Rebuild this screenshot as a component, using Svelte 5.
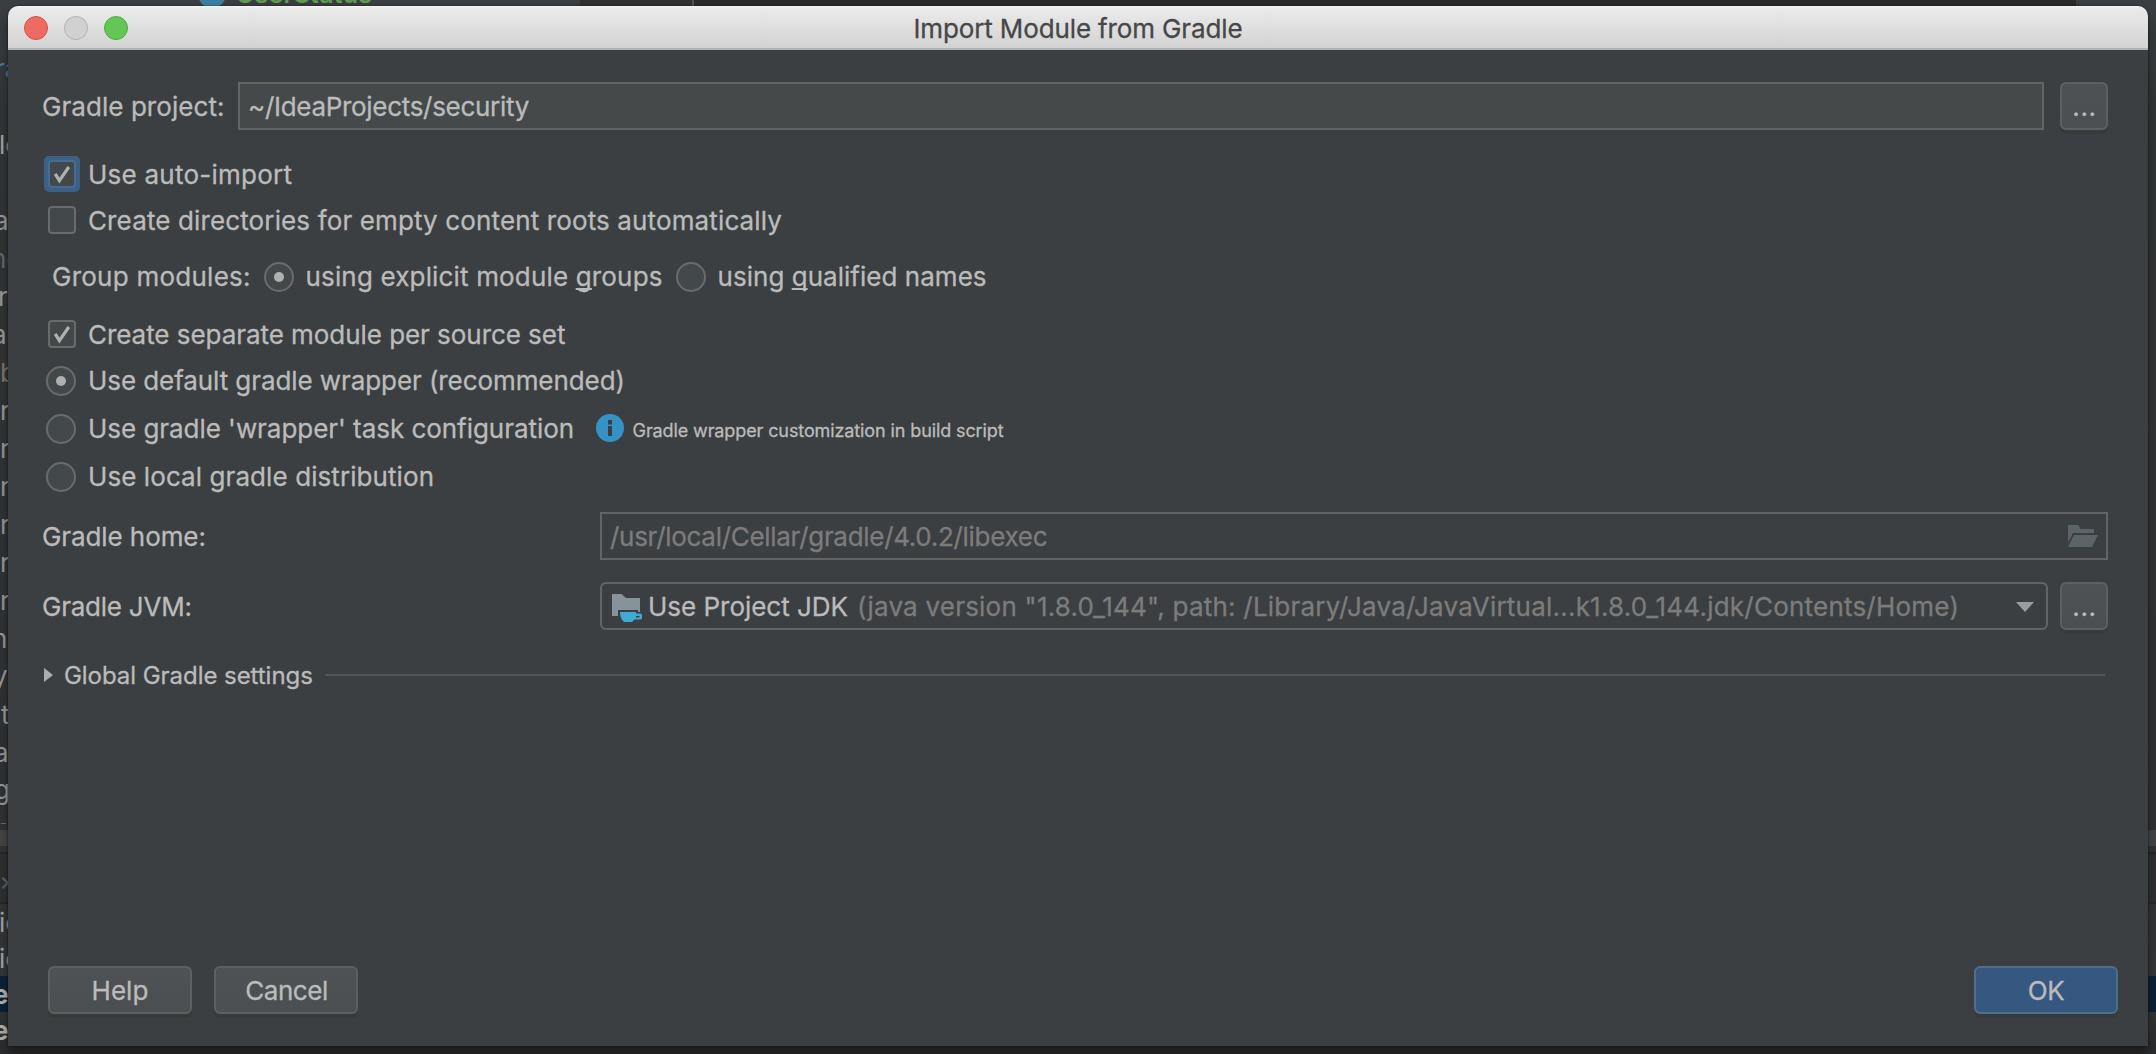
<script>
  // Fragments of the IDE project tree that stay visible beside the dialog.
  const fragments = [
    { text: 'ra', x: -5, y: 78, color: '#4e7ba3' },
    { text: 'lo', x: -1, y: 154, color: '#a0a4a0' },
    { text: 'a', x: -6, y: 230, color: '#96989a' },
    { text: 'ne', x: -9, y: 268, color: '#66686a' },
    { text: 'r', x: -2, y: 306, color: '#96989a' },
    { text: 'ar', x: -8, y: 344, color: '#96989a' },
    { text: 'b', x: 0, y: 382, color: '#7d7468' },
    { text: 'r', x: 0, y: 420, color: '#96989a' },
    { text: 'r', x: 0, y: 458, color: '#96989a' },
    { text: 'r', x: 0, y: 496, color: '#96989a' },
    { text: 'r', x: 0, y: 534, color: '#96989a' },
    { text: 'r', x: 0, y: 572, color: '#96989a' },
    { text: 'r', x: 0, y: 610, color: '#96989a' },
    { text: 'n', x: -8, y: 648, color: '#96989a' },
    { text: 'ys', x: -7, y: 685, color: '#96989a' },
    { text: 't', x: 1, y: 724, color: '#96989a' },
    { text: 'a', x: -6, y: 762, color: '#96989a' },
    { text: 'g', x: -6, y: 799, color: '#96989a' },
    { text: '×', x: -1, y: 890, color: '#5e6062' },
    { text: 'ic', x: -1, y: 932, color: '#a0a4a6' },
    { text: 'ic', x: -1, y: 968, color: '#a0a4a6' },
    { text: 'e', x: -7, y: 1004, color: '#b0b0b0', bold: true },
    { text: 'e', x: -7, y: 1040, color: '#b0b0b0', bold: true },
  ];

  let autoImport = $state(true);
  let createDirs = $state(false);
  let perSourceSet = $state(true);
  let grouping = $state('explicit');
  let distribution = $state('default');
</script>

{#snippet check(on)}
  <span class="box">
    {#if on}
      <svg viewBox="0 0 24 24" width="24" height="24"><path d="M5.2 11.8 9.4 18.6 18.8 5" /></svg>
    {/if}
  </span>
{/snippet}

{#snippet radio(on)}
  <span class="radio">{#if on}<i></i>{/if}</span>
{/snippet}

<div class="desktop">
  <div class="backdrop" aria-hidden="true">
    <div class="editor"></div>
    <div class="class-icon"></div>
    <div class="class-name">UserStatus</div>
    <div class="scrollbar"></div>
    <div class="tabs"></div>
    <div class="selection"></div>
    <svg class="tree" width="8" height="1054">
      {#each fragments as f}
        <text x={f.x} y={f.y} fill={f.color} font-weight={f.bold ? 700 : 400}>{f.text}</text>
      {/each}
      <path d="M1 823.5h5" stroke="#6a6c6e" />
    </svg>
  </div>

  <section class="dialog">
    <header>
      <div class="lights"><i class="red"></i><i class="grey"></i><i class="green"></i></div>
      <h1>Import Module from Gradle</h1>
    </header>

    <div class="body">
      <div class="row project">
        <span class="label l-project">Gradle project:</span>
        <div class="field"><span class="path">~/IdeaProjects/security</span></div>
        <button class="more">...</button>
      </div>

      <button class="row opt auto" onclick={() => (autoImport = !autoImport)}>
        <span class="focus">{@render check(autoImport)}</span>
        <span class="t-auto">Use auto-import</span>
      </button>
      <button class="row opt dirs" onclick={() => (createDirs = !createDirs)}>
        <span class="slot">{@render check(createDirs)}</span>
        <span class="t-dirs">Create directories for empty content roots automatically</span>
      </button>

      <div class="row group">
        <span class="label l-group">Group modules:</span>
        <button class="choice first" onclick={() => (grouping = 'explicit')}>
          {@render radio(grouping === 'explicit')}
          <span class="t-explicit">using explicit module <u>g</u>roups</span>
        </button>
        <button class="choice" onclick={() => (grouping = 'qualified')}>
          {@render radio(grouping === 'qualified')}
          <span class="t-qualified">using <u>q</u>ualified names</span>
        </button>
      </div>

      <button class="row opt separate" onclick={() => (perSourceSet = !perSourceSet)}>
        <span class="slot">{@render check(perSourceSet)}</span>
        <span class="t-separate">Create separate module per source set</span>
      </button>

      <button class="row dist" onclick={() => (distribution = 'default')}>
        {@render radio(distribution === 'default')}
        <span class="t-default">Use default gradle wrapper (recommended)</span>
      </button>
      <button class="row dist next" onclick={() => (distribution = 'task')}>
        {@render radio(distribution === 'task')}
        <span class="t-task">Use gradle 'wrapper' task configuration</span>
        <svg class="info" width="28" height="28" viewBox="0 0 28 28">
          <circle cx="14" cy="14" r="14" fill="#3592c4" />
          <path d="M12 6h4v4.500h-4zM12 12h4v10h-4z" fill="#3c3f41" />
        </svg>
        <span class="hint">Gradle wrapper customization in build script</span>
      </button>
      <button class="row dist next" onclick={() => (distribution = 'local')}>
        {@render radio(distribution === 'local')}
        <span class="t-local">Use local gradle distribution</span>
      </button>

      <div class="row home">
        <span class="label l-home">Gradle home:</span>
        <div class="field disabled">
          <span class="path">/usr/local/Cellar/gradle/4.0.2/libexec</span>
          <svg width="30" height="22" viewBox="0 0 30 22" fill="#5d6467">
            <path d="M0 0h10l2.500 4H26v4H5L0 17.500z" />
            <path d="M6 10h24l-6 12H0z" />
          </svg>
        </div>
      </div>

      <div class="row jvm">
        <span class="label l-jvm">Gradle JVM:</span>
        <div class="select">
          <svg width="31" height="28" viewBox="0 0 31 28">
            <path d="M0 0h9.500l4.500 4h14v14h-2v-2H6v6H0z" fill="#87939a" />
            <path d="M8 18h16v1.500h4.500q1.500 0 1.500 1.500v3q0 1.500-1.500 1.500h-6L20 28h-8q-4-3.500-4-10zM24 22v1.500h3.500V22z" fill="#40a9d4" fill-rule="evenodd" />
          </svg>
          <span class="jdk">Use Project JDK</span>
          <span class="version">(java version "1.8.0_144", path: /Library/Java/JavaVirtual...k1.8.0_144.jdk/Contents/Home)</span>
          <svg class="arrow" width="18" height="10" viewBox="0 0 18 10"><path d="M0 0h18l-9 10z" fill="#9a9da0" /></svg>
        </div>
        <button class="more">...</button>
      </div>

      <div class="row global">
        <svg width="9" height="14" viewBox="0 0 9 14"><path d="M0 0l9 7-9 7z" fill="#adadad" /></svg>
        <span>Global Gradle settings</span>
        <hr />
      </div>

      <footer>
        <button class="btn help">Help</button>
        <button class="btn cancel">Cancel</button>
        <button class="btn ok">OK</button>
      </footer>
    </div>
  </section>
</div>

<style>
  :global(body) { overflow: hidden; }
  .desktop {
    position: relative;
    box-sizing: border-box;
    width: 2156px;
    height: 1054px;
    padding: 6px 8px 8px;
    background: linear-gradient(#3a3e40, #323536 110px, #303132 780px, #353637 1000px, #2b2c2d);
    font: 26px/30px Inter, sans-serif;
    color: #bbb;
    overflow: hidden;
  }
  .desktop * { box-sizing: border-box; }
  button {
    margin: 0;
    padding: 0;
    border: 0;
    background: none;
    font: inherit;
    color: inherit;
    text-align: left;
  }
  span { white-space: pre; }
  svg { display: block; flex: none; }

  /* IDE window behind the dialog */
  .backdrop, .backdrop > * { position: absolute; }
  .backdrop { inset: 0; overflow: hidden; }
  .editor { left: 580px; top: 0; width: 1496px; height: 8px; background: #2a2a2b; }
  .editor::before { content: ''; display: block; width: 112px; height: 8px; border-right: 2px solid #505050; background: #303132; }
  .class-icon { left: 198px; top: -20px; width: 28px; height: 28px; border-radius: 50%; background: #3c7f9d; }
  .class-name { left: 236px; top: -21px; font-size: 25px; font-weight: 600; letter-spacing: 0.2px; color: #5f9a50; }
  .scrollbar { left: 0; right: 0; top: 830px; height: 16px; background: #454546; }
  .tabs { left: 0; right: 0; top: 852px; height: 52px; border: solid #262728; border-width: 2px 0; background: #2e2f30; }
  .selection { left: 0; right: 0; top: 976px; height: 36px; background: #0c2135; }
  .tree { left: 0; top: 0; }

  .dialog {
    position: relative;
    display: flex;
    flex-direction: column;
    height: 1040px;
    border-radius: 11px 11px 0 0;
    background: #3c3f41;
    box-shadow: 0 0 2px rgba(0, 0, 0, 0.7), 0 10px 12px rgba(0, 0, 0, 0.35);
    -webkit-text-stroke: 0.3px currentColor;
  }
  header {
    display: grid;
    grid-template-columns: 1fr auto 1fr;
    align-items: center;
    height: 44px;
    padding: 0 16px;
    border-bottom: 2px solid #b1b1b1;
    border-radius: 10px 10px 0 0;
    background: linear-gradient(#f8f8f8, #ebebeb 2px, #d2d2d2);
  }
  .lights { display: flex; gap: 16px; padding-top: 2px; }
  .lights i { width: 24px; height: 24px; border: 1px solid; border-radius: 50%; }
  .lights .red { border-color: #d5524a; background: #ed6b60; }
  .lights .grey { border-color: #b2b2b2; background: #d1d1d1; }
  .lights .green { border-color: #52a844; background: #62c754; }
  h1 { margin: 3px 0 0; font-size: 26px; font-weight: 400; line-height: 30px; letter-spacing: -0.13px; color: #474747; }

  .body { display: flex; flex: 1; flex-direction: column; padding: 32px 30px 32px 34px; }
  .row { display: flex; align-items: center; flex: none; }
  .row > span:not(.focus, .slot, .radio), .field > span, .select > span { position: relative; top: 0.5px; }
  .group > span.label.l-group, .choice > span:not(.radio), .dist > span:not(.radio, .hint) { position: relative; top: -0.5px; }

  .project, .home, .jvm { height: 48px; padding-right: 10px; }
  .l-project { width: 196px; letter-spacing: 0.06px; }
  .l-home { width: 558px; letter-spacing: -0.09px; }
  .l-jvm { width: 558px; letter-spacing: -0.23px; }
  .field {
    display: flex;
    flex: 1;
    align-items: center;
    justify-content: space-between;
    height: 48px;
    padding: 0 8px;
    border: 2px solid #646464;
    background: #45494a;
  }
  .path { letter-spacing: -0.3px; }
  .project .field { margin-right: 16px; }
  .field.disabled { background: none; color: #7c7c7c; }
  .more, .btn {
    height: 48px;
    border: 2px solid #5e6060;
    border-radius: 6px;
    background: linear-gradient(#4e5254, #4b4f51);
    box-shadow: 0 4px 0 rgba(50, 50, 50, 0.45);
    line-height: 45px;
    text-align: center;
  }
  .more { width: 48px; padding-left: 1px; letter-spacing: 0.6px; }

  .opt { height: 36px; padding-left: 2px; gap: 8px; }
  .focus, .slot { display: grid; place-items: center; width: 36px; height: 36px; }
  .focus { border-radius: 5px; background: #3d6185; }
  .box { display: block; width: 28px; height: 28px; border: 2px solid #6b6b6b; border-radius: 4px; background: #43494a; }
  .focus .box { border-color: #466d94; }
  .box path { fill: none; stroke: #afb1b1; stroke-width: 3.2; }
  .auto { margin-top: 26px; }
  .dirs { margin-top: 10px; }
  .separate { margin-top: 24px; }

  .radio { display: grid; flex: none; place-items: center; width: 30px; height: 30px; border: 2px solid #6b6b6b; border-radius: 50%; background: #43494a; }
  .radio i { width: 10px; height: 10px; border-radius: 50%; background: #afb1b1; }
  .group { height: 30px; margin-top: 24px; padding-left: 10px; }
  .l-group { width: 212px; letter-spacing: 0.25px; }
  .choice { display: flex; align-items: center; gap: 11.5px; }
  .choice.first { width: 412px; }
  u { text-decoration-thickness: 2px; text-underline-offset: 2px; text-decoration-skip-ink: none; }
  .dist { height: 30px; margin-top: 14px; padding-left: 4px; gap: 12px; }
  .dist.next { margin-top: 18px; }

  .t-auto { letter-spacing: 0.24px; }
  .t-dirs { letter-spacing: 0.13px; }
  .t-explicit { letter-spacing: 0.16px; }
  .t-qualified { letter-spacing: 0.03px; }
  .t-separate { letter-spacing: -0.05px; }
  .t-default { letter-spacing: -0.08px; }
  .t-task { letter-spacing: -0.04px; }
  .t-local { letter-spacing: 0.08px; }
  .info { margin: -2px 0 0 9.5px; }
  .row > span.hint { top: 1.5px; margin-left: -3px; font-size: 18px; letter-spacing: -0.11px; }

  .home { margin-top: 20px; }
  .jvm { margin-top: 22px; }
  .select { display: flex; align-items: center; width: 1448px; height: 48px; margin-right: 12px; padding: 0 12px 0 10px; border: 2px solid #646464; border-radius: 6px; }
  .select svg:first-child { margin-top: 4px; }
  .jdk { margin-left: 5px; letter-spacing: -0.02px; }
  .version { margin-left: 9px; letter-spacing: 0.22px; color: #7c7c7c; }
  .arrow { margin: 2px 0 0 auto; }

  .global { height: 30px; margin-top: 30px; padding: 0 13px 0 2px; font-size: 24px; }
  .global span { margin-left: 11px; letter-spacing: -0.05px; }
  .global hr { flex: 1; height: 2px; margin: 0 0 0 12px; border: 0; background: #555; }

  footer { display: flex; gap: 22px; margin-top: auto; padding-left: 6px; }
  .btn { width: 144px; }
  .help { letter-spacing: 0.07px; }
  .cancel { padding-left: 1px; letter-spacing: -0.45px; }
  .ok { margin-left: auto; border-color: #4c708c; background: #365880; letter-spacing: -0.38px; }
</style>
